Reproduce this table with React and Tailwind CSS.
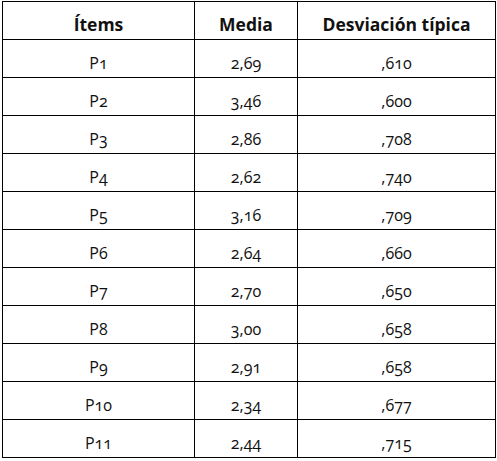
import React from 'react';

const rows = [
  ['P1', '2,69', ',610'],
  ['P2', '3,46', ',600'],
  ['P3', '2,86', ',708'],
  ['P4', '2,62', ',740'],
  ['P5', '3,16', ',709'],
  ['P6', '2,64', ',660'],
  ['P7', '2,70', ',650'],
  ['P8', '3,00', ',658'],
  ['P9', '2,91', ',658'],
  ['P10', '2,34', ',677'],
  ['P11', '2,44', ',715'],
];

export default function App() {
  return (
    <div className="w-[497px] h-[461px] bg-white pt-[1px] pl-[2px] font-['Open_Sans',sans-serif] text-[#111]">
      <table className="border-collapse w-[493px] table-fixed oldstyle-nums">
        <colgroup>
          <col className="w-[192px]" />
          <col className="w-[103px]" />
          <col className="w-[198px]" />
        </colgroup>
        <thead>
          <tr className="h-[38px]">
            <th className="border border-black text-[17.5px] leading-[24px] font-bold align-bottom pb-[3px]">Ítems</th>
            <th className="border border-black text-[17.5px] leading-[24px] font-bold align-bottom pb-[3px]">Media</th>
            <th className="border border-black text-[17.5px] leading-[24px] font-bold align-bottom pb-[3px]">Desviación típica</th>
          </tr>
        </thead>
        <tbody>
          {rows.map(([item, media, desv]) => (
            <tr key={item} className="h-[38px]">
              <td className="border border-black text-center text-[16px] align-bottom pb-[2px]">{item}</td>
              <td className="border border-black text-center text-[16px] align-bottom pb-[2px]">{media}</td>
              <td className="border border-black text-center text-[16px] align-bottom pb-[2px]">{desv}</td>
            </tr>
          ))}
        </tbody>
      </table>
    </div>
  );
}
